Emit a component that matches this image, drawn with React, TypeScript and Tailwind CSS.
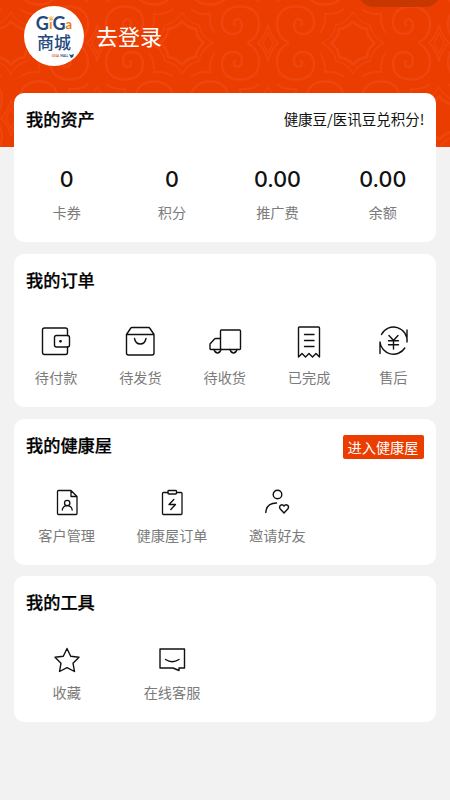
import React from 'react';

const FONT = 'font-["Noto_Sans_CJK_SC","Noto_Sans",sans-serif]';

const ASSETS = [
  { label: '卡券', value: '0' },
  { label: '积分', value: '0' },
  { label: '推广费', value: '0.00' },
  { label: '余额', value: '0.00' },
];

// centres of the curl motif, odd rows are shifted by half a period
const CURLS = [
  [97, 43], [268, 43], [439, 43],
  [11, -32], [182, -32], [353, -32],
  [11, 118], [182, 118], [353, 118],
];
const STARS = [
  [11, 43], [182, 43], [353, 43],
  [97, 118], [268, 118], [439, 118],
  [97, -32], [268, -32], [439, -32],
];
const FLIPS = ['scale(1 1)', 'scale(-1 1)', 'scale(1 -1)', 'scale(-1 -1)'];

function HeaderPattern() {
  return (
    <svg className="absolute inset-0" width="450" height="147" fill="none" stroke="#ee460e" strokeWidth="2.4">
      {CURLS.map(([x, y]) => (
        <g key={`c${x}${y}`} transform={`translate(${x} ${y})`}>
          {FLIPS.map(f => (
            <path
              key={f}
              transform={f}
              d="M-21 0C-13 -4 -9 -11 -9 -19C-9 -30 -16 -36.500 -28 -36.500C-40 -36.500 -46 -30 -46 -21C-46 -13 -41 -9 -35 -9C-29 -9 -26 -13 -26 -18C-26 -23 -29 -24.500 -32 -23.500C-35 -22.500 -35 -18 -32 -18"
            />
          ))}
          <path d="M0 -18Q-3 -6 -10 0Q-3 6 0 18Q3 6 10 0Q3 -6 0 -18Z" strokeWidth="1.800" />
          <path d="M0 -10L-5 0L0 10L5 0Z" strokeWidth="1.500" />
        </g>
      ))}
      {STARS.map(([x, y]) => (
        <g key={`s${x}${y}`} transform={`translate(${x} ${y})`}>
          {FLIPS.map(f => (
            <g key={f} transform={f}>
              <path d="M0 -31Q-6 -20 -17 -18Q-19 -6 -31 0" strokeWidth="1.400" />
              <path d="M0 -22Q-5 -15 -14 -14Q-14 -6 -22 0" strokeWidth="2.800" />
              <path d="M-9 -34Q-16 -28 -28 -29Q-27 -17 -33 -10" strokeWidth="1.800" />
            </g>
          ))}
        </g>
      ))}
    </svg>
  );
}

function Logo() {
  return (
    <div className='relative w-[60px] h-[60px] rounded-full bg-white overflow-hidden text-[#23497f] flex flex-col items-center font-["Lato","Noto_Sans_CJK_SC",sans-serif]'>
      <div className="relative mt-[8px] h-[18px] flex items-end font-bold text-[18px] leading-[18px]">
        <span>G</span>
        <span className="text-[#f08a24] text-[14px] leading-[16px]">ı</span>
        <span>G</span>
        <span className="text-[#f07a24] text-[13px] leading-[16px]">a</span>
        <svg className="absolute left-[11px] top-[1px]" width="8" height="8" viewBox="0 0 8 8">
          <path d="M4 1V6M1.500 2.500L6.500 5M6.500 2L2 5.500" stroke="#f5b03c" strokeWidth="1" />
        </svg>
      </div>
      <div className="text-[17px] leading-[19px] font-medium mt-[1px]">商城</div>
      <div className="flex items-center text-[3px] leading-[4px] font-bold mt-[2px] ml-[18px] gap-[1px]">
        <span className="text-[#e8562a]">GIGA</span>
        <span>MALL</span>
        <svg width="5" height="4" viewBox="0 0 5 4"><path d="M0 0L2 1L5 0L4 3L2 4Z" fill="#23497f" /></svg>
      </div>
    </div>
  );
}

function Icon({ children, sw = 1.4 }: { children: React.ReactNode; sw?: number }) {
  return (
    <svg width="34" height="34" viewBox="0 0 34 34" fill="none" stroke="#111" strokeWidth={sw} strokeLinejoin="round" strokeLinecap="round">
      {children}
    </svg>
  );
}

const ORDERS = [
  {
    label: '待付款',
    icon: (
      <Icon>
        <path d="M28.500 10.500V5Q28.500 3 26.500 3H5.500Q3.500 3 3.500 5V27.500Q3.500 29.500 5.500 29.500H26.500Q28.500 29.500 28.500 27.500V22" />
        <rect x="15.500" y="10.500" width="15" height="11.500" rx="2" />
        <circle cx="21.500" cy="16.300" r="1" fill="#111" stroke="none" />
        <circle cx="21.500" cy="16.300" r=".6" />
      </Icon>
    ),
  },
  {
    label: '待发货',
    icon: (
      <Icon>
        <path d="M3.500 9.500L7.500 3.500Q8 2.500 9 2.500H25.500Q26.500 2.500 27 3.500L31 9.500V28Q31 30 29 30H5.500Q3.500 30 3.500 28ZM3.500 9.500H31" />
        <path d="M11.500 13.500Q12.500 19 17.300 19Q22 19 23 13.500" />
      </Icon>
    ),
  },
  {
    label: '待收货',
    icon: (
      <Icon>
        <rect x="12.500" y="5" width="20" height="19.500" rx="1" />
        <path d="M12.500 24.500H3Q2 24.500 2 23.500V19L6.500 14Q7 13.500 8 13.500H12.500" />
        <path d="M6 24.500Q7 28 9.500 28Q12 28 13 24.500M22 24.500Q23 28 25.500 28Q28 28 29 24.500" />
      </Icon>
    ),
  },
  {
    label: '已完成',
    icon: (
      <Icon>
        <path d="M6.500 32V3Q6.500 2 7.500 2H26.500Q27.500 2 27.500 3V32L24 28.500L20.500 32L17 28.500L13.500 32L10 28.500Z" />
        <path d="M12.500 9.500H22M12.500 15.500H22M12.500 21.500H22" />
      </Icon>
    ),
  },
  {
    label: '售后',
    icon: (
      <Icon>
        <path d="M5.500 9.500A13.500 13.500 0 0 1 31 17V5M28.800 23A13.500 13.500 0 0 1 4 17V28.500" />
        <path d="M13 10.500L17.500 15.500L22 10.500M17.500 15.500V24M12.500 15.800H22.500M12.500 19.800H22.500" />
      </Icon>
    ),
  },
];

const HEALTH = [
  {
    label: '客户管理',
    icon: (
      <Icon sw={1.3}>
        <path d="M21 5.500H8.500Q7.500 5.500 7.500 6.500V28.500Q7.500 29.500 8.500 29.500H26Q27 29.500 27 28.500V11.500ZM21 5.500V11.500H27" />
        <circle cx="17.200" cy="18" r="2.700" />
        <path d="M12.300 25Q13 20.700 17.200 20.700Q21.500 20.700 22.200 25" />
      </Icon>
    ),
  },
  {
    label: '健康屋订单',
    icon: (
      <Icon sw={1.3}>
        <path d="M13 7.500H8.500Q7.500 7.500 7.500 8.500V28.500Q7.500 29.500 8.500 29.500H26Q27 29.500 27 28.500V8.500Q27 7.500 26 7.500H21.500" />
        <rect x="13" y="5.500" width="8.500" height="3.500" rx=".8" />
        <path d="M18.800 14.500L14 19.500H20.500L15.800 24.500" />
      </Icon>
    ),
  },
  {
    label: '邀请好友',
    icon: (
      <Icon sw={1.4}>
        <circle cx="17.500" cy="9.500" r="4.300" />
        <path d="M5.800 27.500Q6.500 18 16.500 18" />
        <path d="M24 28L20.300 24Q18.800 22 20.500 20.300Q22.500 19 24 21Q25.500 19 27.700 20.300Q29.300 22 27.700 24Z" />
      </Icon>
    ),
  },
];

const TOOLS = [
  {
    label: '收藏',
    icon: (
      <Icon sw={1.4}>
        <path d="M17 5.500L20.700 13.300L29 14.300L23 20.200L24.500 28.500L17 24.700L9.500 28.500L11 20.200L5 14.300L13.300 13.300Z" />
      </Icon>
    ),
  },
  {
    label: '在线客服',
    icon: (
      <Icon sw={1.4}>
        <path d="M5 6H29.500V25H24V27.500L18 25H5Z" />
        <path d="M10.500 16.500Q17.200 21 24 16.500" />
      </Icon>
    ),
  },
];

function IconItem({ icon, label }: { icon: React.ReactNode; label: string }) {
  return (
    <div className="flex flex-col items-center">
      {icon}
      <span className="text-[14.2px] leading-5 text-[#7b7b7b] whitespace-nowrap">{label}</span>
    </div>
  );
}

function Title({ children }: { children: React.ReactNode }) {
  return <h2 className="text-[17.2px] leading-6 font-medium text-black [-webkit-text-stroke:0.25px_#000]">{children}</h2>;
}

export default function App() {
  return (
    <div className={`relative w-[450px] h-[800px] bg-[#f2f2f2] overflow-hidden ${FONT}`}>
      {/* header background */}
      <div className="absolute inset-x-0 top-0 h-[147px] bg-[#ec3d00] overflow-hidden">
        <HeaderPattern />
        <div className="absolute left-[358px] -top-[25px] w-[83px] h-8 rounded-full bg-[#c93700]"></div>
      </div>

      <div className="relative">
        <header className="h-[93px] pt-[6px] pl-6 flex items-start">
          <Logo />
          <span className="ml-[12px] mt-[13px] text-[22px] leading-8 text-white">去登录</span>
        </header>

        <main className="pl-[14px] pr-[14.5px] flex flex-col">
          <section className="h-[149px] bg-white rounded-[10px]">
            <div className="flex items-center justify-between pl-3 pr-[11px] pt-[14px]">
              <Title>我的资产</Title>
              <span className="text-[14.5px] leading-6 text-[#111] whitespace-nowrap">健康豆/医讯豆兑积分!</span>
            </div>
            <div className="grid grid-cols-4 mt-[32px]">
              {ASSETS.map(a => (
                <div key={a.label} className="flex flex-col items-center">
                  <span className='font-["Inter",sans-serif] text-[21.5px] leading-8 font-medium text-[#111]'>{a.value}</span>
                  <span className="mt-[7px] text-[14.2px] leading-5 text-[#7b7b7b]">{a.label}</span>
                </div>
              ))}
            </div>
          </section>

          <section className="mt-3 h-[153px] bg-white rounded-[10px]">
            <div className="pl-3 pt-[14px]">
              <Title>我的订单</Title>
            </div>
            <div className="grid grid-cols-5 mt-[33px] [&>div]:gap-2">
              {ORDERS.map(o => <IconItem key={o.label} {...o} />)}
            </div>
          </section>

          <section className="mt-3 h-[146px] bg-white rounded-[10px]">
            <div className="flex items-start justify-between pl-3 pr-[12px] pt-[14px]">
              <Title>我的健康屋</Title>
              <button className="mt-[2px] w-[81px] h-6 rounded-[2px] bg-[#ec3d00] text-white text-[14.2px] leading-[23px] whitespace-nowrap">进入健康屋</button>
            </div>
            <div className="grid grid-cols-4 mt-[26px] [&>div]:gap-[6px]">
              {HEALTH.map(h => <IconItem key={h.label} {...h} />)}
            </div>
          </section>

          <section className="mt-[11px] h-[146px] bg-white rounded-[10px]">
            <div className="pl-3 pt-[14px]">
              <Title>我的工具</Title>
            </div>
            <div className="grid grid-cols-4 mt-[29px] [&>div]:gap-[5px]">
              {TOOLS.map(t => <IconItem key={t.label} {...t} />)}
            </div>
          </section>
        </main>
      </div>
    </div>
  );
}
